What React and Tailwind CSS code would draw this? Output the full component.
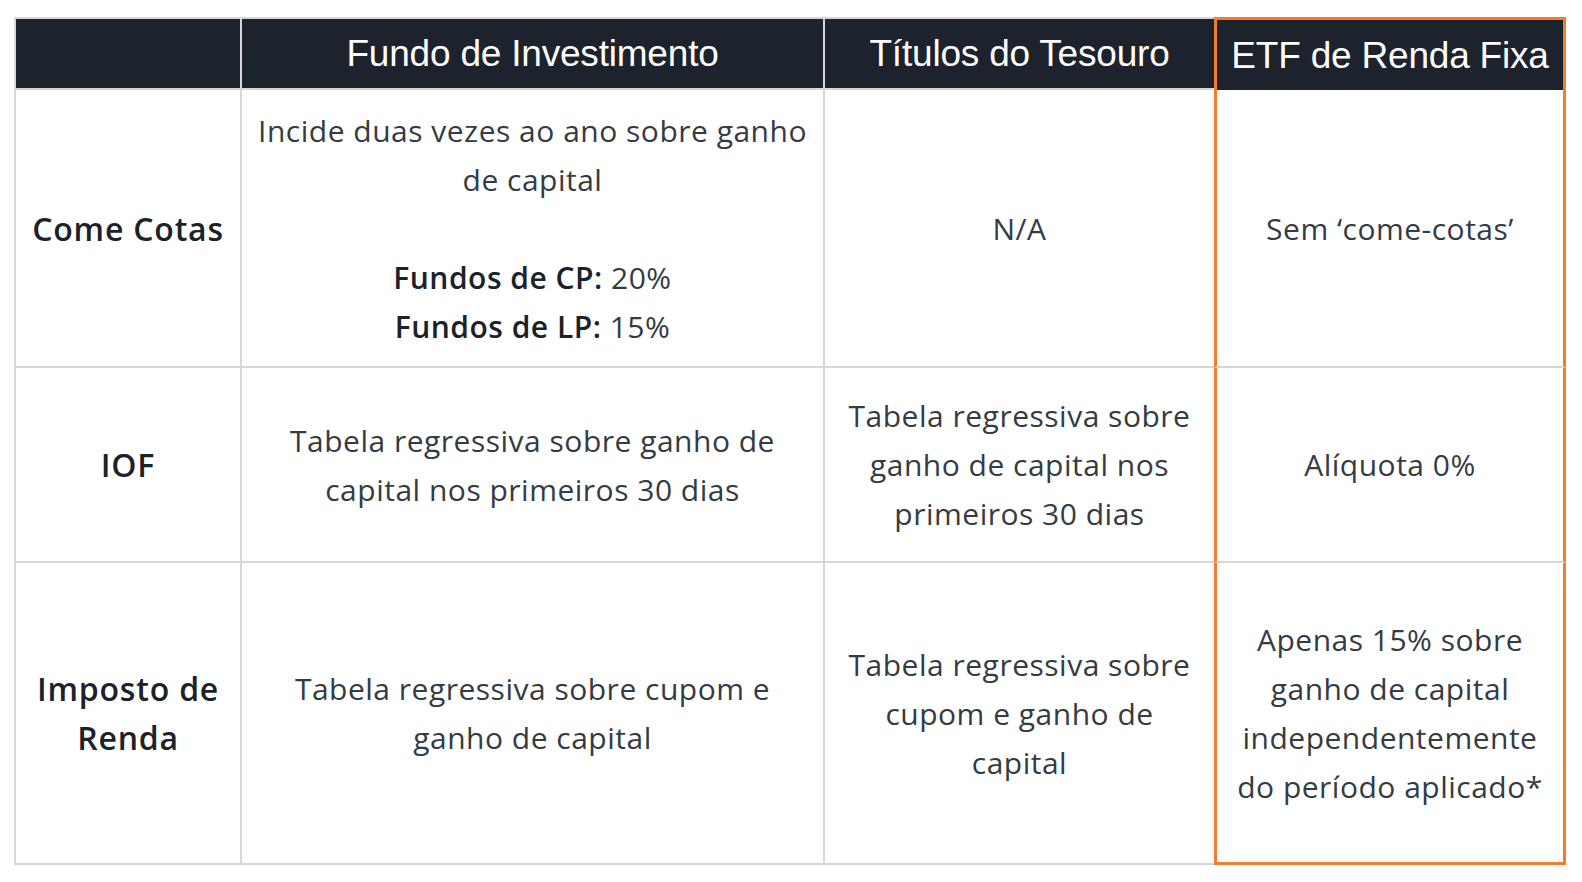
const body = "font-['Open_Sans',sans-serif] text-[30px] leading-[49px] tracking-[0.5px] text-[#343b42]";
const head = "font-['Liberation_Sans',Arial,sans-serif] text-[37px] tracking-[-0.2px] text-white";

const Cell = ({ children, className = '' }) => (
  <div className={`flex items-center justify-center text-center px-2 border-[#d6d6d6] ${className}`}>
    {children}
  </div>
);

const Label = ({ children }) => (
  <span className="font-semibold text-[#1c2229]">{children}</span>
);

const RowLabel = ({ children }) => (
  <span className="font-semibold text-[32px] tracking-[0.8px] text-[#1c2229]">{children}</span>
);

export default function App() {
  return (
    <div className="w-[1582px] h-[882px] bg-white pt-[17px] pl-[14px]">
      <div
        className={`grid grid-cols-[228px_583px_389px_352px] grid-rows-[73px_278px_195px_302px] w-[1552px] ${body}`}
      >
        {/* cabeçalho */}
        <Cell className="bg-[#1d232c] border-t-2 border-l-2 border-b-2 border-r-2" />
        <Cell className={`bg-[#1d232c] border-t-2 border-b-2 border-r-2 ${head}`}>Fundo de Investimento</Cell>
        <Cell className={`bg-[#1d232c] border-t-2 border-b-2 ${head}`}>Títulos do Tesouro</Cell>
        <Cell className={`bg-[#1d232c] border-[3px] border-b-0 border-[#f47c2c] ${head}`}>ETF de Renda Fixa</Cell>

        {/* Come Cotas */}
        <Cell className="border-l-2 border-r-2 border-b-2"><RowLabel>Come Cotas</RowLabel></Cell>
        <Cell className="border-r-2 border-b-2">
          <div>
            Incide duas vezes ao ano sobre ganho<br />de capital<br /><br />
            <Label>Fundos de CP:</Label> 20%<br />
            <Label>Fundos de LP:</Label> 15%
          </div>
        </Cell>
        <Cell className="border-b-2">N/A</Cell>
        <Cell className="border-l-[3px] border-r-[3px] border-l-[#f47c2c] border-r-[#f47c2c] border-b-2">Sem ‘come-cotas’</Cell>

        {/* IOF */}
        <Cell className="border-l-2 border-r-2 border-b-2"><RowLabel>IOF</RowLabel></Cell>
        <Cell className="border-r-2 border-b-2">
          <div>Tabela regressiva sobre ganho de<br />capital nos primeiros 30 dias</div>
        </Cell>
        <Cell className="border-b-2">
          <div>Tabela regressiva sobre<br />ganho de capital nos<br />primeiros 30 dias</div>
        </Cell>
        <Cell className="border-l-[3px] border-r-[3px] border-l-[#f47c2c] border-r-[#f47c2c] border-b-2">Alíquota 0%</Cell>

        {/* Imposto de Renda */}
        <Cell className="border-l-2 border-r-2 border-b-2">
          <RowLabel>Imposto de<br />Renda</RowLabel>
        </Cell>
        <Cell className="border-r-2 border-b-2">
          <div>Tabela regressiva sobre cupom e<br />ganho de capital</div>
        </Cell>
        <Cell className="border-b-2">
          <div>Tabela regressiva sobre<br />cupom e ganho de<br />capital</div>
        </Cell>
        <Cell className="border-[3px] border-t-0 border-[#f47c2c]">
          <div>Apenas 15% sobre<br />ganho de capital<br />independentemente<br />do período aplicado*</div>
        </Cell>
      </div>
    </div>
  );
}
